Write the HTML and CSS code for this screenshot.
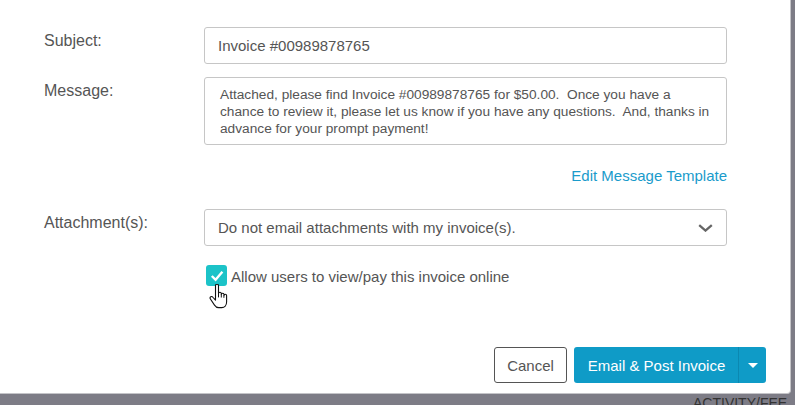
FILE: index.html
```html
<!DOCTYPE html>
<html lang="en">
<head>
    <meta charset="UTF-8">
    <meta name="viewport" content="width=device-width, initial-scale=1.0">
    <title>Email Invoice</title>
    <link rel="stylesheet" href="styles.css">
</head>
<body>
    <div class="modal">
        <div class="modal-body">
            <div class="form-row">
                <label class="field-label">Subject:</label>
                <div class="text-input">Invoice #00989878765</div>
            </div>
            <div class="form-row">
                <label class="field-label">Message:</label>
                <div class="message-box">Attached, please find Invoice #00989878765 for $50.00.&nbsp; Once you have a<br>chance to review it, please let us know if you have any questions.&nbsp; And, thanks in<br>advance for your prompt payment!</div>
            </div>
            <div class="template-link">Edit Message Template</div>
            <div class="form-row">
                <label class="field-label">Attachment(s):</label>
                <div class="select-box">
                    <span>Do not email attachments with my invoice(s).</span>
                    <svg class="chevron" width="15" height="8" viewBox="0 0 15 8">
                        <polyline points="1.2,1.2 7.5,6.6 13.8,1.2" fill="none" stroke="#666" stroke-width="2.3"/>
                    </svg>
                </div>
            </div>
            <div class="check-row">
                <span class="checkbox">
                    <svg width="21" height="21" viewBox="0 0 21 21">
                        <polyline points="5.8,11 9.6,14.8 16.4,6.8" fill="none" stroke="#fff" stroke-width="2.4"/>
                    </svg>
                </span>
                <span class="check-label">Allow users to view/pay this invoice online</span>
                <!-- mouse pointer over the checkbox -->
                <svg class="hand-cursor" width="19" height="25" viewBox="0 0 19 25">
                    <path d="M6.5 1.8c0-.9.7-1.6 1.5-1.6s1.5.7 1.5 1.6V9.6c0-.8.6-1.4 1.4-1.4s1.4.6 1.4 1.4v.9c0-.8.6-1.3 1.4-1.3s1.3.6 1.3 1.3v.9c0-.7.6-1.2 1.3-1.2s1.3.6 1.3 1.3V18c0 3.3-2.1 5.6-4.8 5.6H9.6c-2 0-3.1-1-4.1-2.5L1.4 15c-.6-.9-.4-1.9.4-2.3.8-.4 1.7 0 2.3.8l2.4 2.6z" fill="#fff" stroke="#111" stroke-width="1.1" stroke-linejoin="round"/>
                    <path d="M9.5 9.6v3.8M12.3 10.5v3M14.9 11.4v2.4" fill="none" stroke="#111" stroke-width="1"/>
                </svg>
            </div>
        </div>
        <div class="modal-footer">
            <button class="btn btn-cancel">Cancel</button>
            <div class="btn-split">
                <button class="btn btn-primary">Email &amp; Post Invoice</button>
                <button class="btn btn-caret"><span class="caret"></span></button>
            </div>
        </div>
    </div>
    <div class="page-behind">ACTIVITY/FEE</div>
</body>
</html>
```

FILE: styles.css
```css
body {
    margin: 0;
    background-color: #7d7c86;
    font-family: "Liberation Sans", Arial, sans-serif;
    color: #555;
    overflow: hidden;
}
.modal {
    width: 790px;
    background-color: #fff;
    border-right: 1px solid #c4c4c8;
    border-bottom: 1px solid #c4c4c8;
    border-bottom-right-radius: 4px;
}
.modal-body {
    padding: 27px 63px 0 43px;
}
.form-row {
    display: grid;
    grid-template-columns: 161px 1fr;
    align-items: start;
}
.form-row + .form-row {
    margin-top: 13px;
}
.field-label {
    font-size: 16px;
    line-height: 18px;
    padding-top: 5px;
    padding-left: 1px;
}
.text-input,
.select-box {
    height: 35px;
    border: 1px solid #c6c6c6;
    border-radius: 3px;
    font-size: 15px;
    line-height: 35px;
    padding: 0 13px;
}
.message-box {
    height: 51px;
    border: 1px solid #c6c6c6;
    border-radius: 3px;
    font-size: 13.7px;
    line-height: 17px;
    padding: 8px 10px 7px 15px;
    white-space: nowrap;
    overflow: hidden;
}
.template-link {
    margin: 22px 0 25px;
    text-align: right;
    font-size: 15px;
    line-height: 17px;
    color: #1a9bcb;
}
.select-box {
    display: flex;
    justify-content: space-between;
    align-items: center;
    padding-right: 13px;
}
.chevron {
    display: block;
}
.check-row {
    position: relative;
    display: flex;
    align-items: center;
    gap: 4px;
    margin: 19px 0 0 163px;
    height: 21px;
}
.checkbox {
    width: 21px;
    height: 21px;
    border-radius: 3px;
    background-color: #1cc3c8;
}
.checkbox svg {
    display: block;
}
.check-label {
    font-size: 15px;
    line-height: 17px;
    padding-top: 2px;
}
.hand-cursor {
    position: absolute;
    left: 3px;
    top: 19px;
}
.modal-footer {
    display: flex;
    justify-content: flex-end;
    gap: 7px;
    margin-top: 61px;
    padding: 0 24px 10px 0;
}
.btn {
    height: 36px;
    font-family: inherit;
    font-size: 15px;
    border-radius: 3px;
    padding: 0;
    margin: 0;
}
.btn-cancel {
    width: 73px;
    background-color: #fff;
    border: 1px solid #555;
    color: #555;
}
.btn-split {
    display: flex;
}
.btn-primary {
    width: 164px;
    border: none;
    background-color: #0f9bc7;
    color: #fff;
    border-radius: 3px 0 0 3px;
    padding-left: 1px;
}
.btn-caret {
    width: 28px;
    border: none;
    border-left: 1px solid #0b88b1;
    background-color: #0f9bc7;
    border-radius: 0 3px 3px 0;
    display: flex;
    align-items: center;
    justify-content: center;
}
.caret {
    width: 0;
    height: 0;
    border-left: 5.5px solid transparent;
    border-right: 5.5px solid transparent;
    border-top: 5.5px solid #fff;
}
.page-behind {
    padding: 1px 0 0 693px;
    font-size: 14px;
    color: #333;
    white-space: nowrap;
}
```
